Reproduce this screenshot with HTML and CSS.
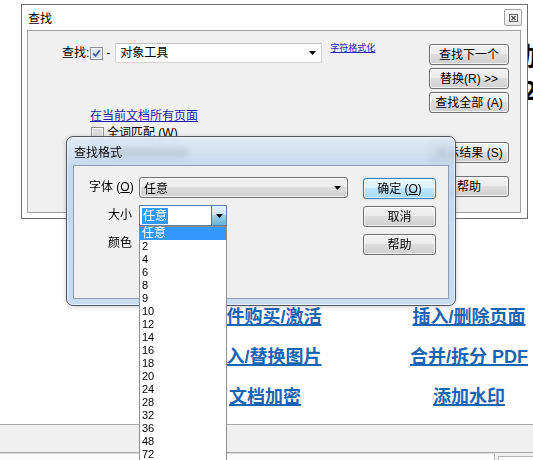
FILE: index.html
```html
<!DOCTYPE html>
<html>
<head>
<meta charset="utf-8">
<link rel="stylesheet" href="styles.css">
</head>
<body>
<div class="page">
  <div class="bg-title"><div>加入</div><div>2012</div></div>
  <div class="links">
    <a>软件购买/激活</a><a>插入/删除页面</a>
    <a>插入/替换图片</a><a>合并/拆分 PDF</a>
    <a>文档加密</a><a>添加水印</a>
  </div>
  <div class="statusbar"></div>
  <div class="fields"><div class="field wide"></div><div class="field"></div></div>
</div>

<div class="find">
  <div class="find-title">
    <span>查找</span>
    <div class="close"><svg width="9" height="8" viewBox="0 0 9 8"><rect x="0.5" y="0.5" width="8" height="7" fill="none" stroke="#666"/><path d="M2.5 2 L6.5 6 M6.5 2 L2.5 6" stroke="#444" stroke-width="1.2"/></svg></div>
  </div>
  <div class="find-panel">
    <div class="find-left">
      <div class="find-row">
        <span class="lbl">查找:</span>
        <svg class="check" width="13" height="13" viewBox="0 0 13 13"><rect x="0.5" y="0.5" width="12" height="12" fill="#f4f4f4" stroke="#8e8f9a"/><rect x="2" y="2" width="9" height="9" fill="#dde4ee"/><path d="M3.2 6.4 L5.4 9 L9.8 3.4" stroke="#3b5998" stroke-width="1.7" fill="none"/></svg>
        <span class="dash">-</span>
        <div class="combo-find"><span>对象工具</span><svg width="7" height="4" viewBox="0 0 7 4"><path d="M0 0h7L3.5 4z" fill="#000"/></svg></div>
        <a class="fmt-link">字符格式化</a>
      </div>
      <a class="scope-link">在当前文档所有页面</a>
      <div class="opt-row">
        <svg class="check2" width="13" height="13" viewBox="0 0 13 13"><rect x="0.5" y="0.5" width="12" height="12" fill="#f4f4f4" stroke="#8e8f8f"/><rect x="2" y="2" width="9" height="9" fill="#dcdcdc"/></svg>
        <span>全词匹配 (W)</span>
      </div>
      <div class="ghost-row"><span class="ghost-box"></span><span class="ghost-bar"></span></div>
    </div>
    <div class="find-buttons">
      <div class="btn">查找下一个</div>
      <div class="btn">替换(R) &gt;&gt;</div>
      <div class="btn">查找全部 (A)</div>
      <div class="btn gap-lg">显示结果 (S)</div>
      <div class="btn gap-md">帮助</div>
    </div>
  </div>
</div>

<div class="format">
  <div class="format-title">查找格式</div>
  <div class="format-panel">
    <div class="form">
      <span class="flbl">字体 (<u>O</u>)</span>
      <div class="combo-btn"><span>任意</span><svg width="7" height="4" viewBox="0 0 7 4"><path d="M0 0h7L3.5 4z" fill="#000"/></svg></div>
      <span class="flbl">大小</span>
      <div class="combo-edit"><span class="sel">任意</span><div class="arrow-btn"><svg width="7" height="4" viewBox="0 0 7 4"><path d="M0 0h7L3.5 4z" fill="#000"/></svg></div></div>
      <span class="flbl">颜色</span>
      <span></span>
    </div>
    <div class="format-buttons">
      <div class="btn default">确定 (<u>O</u>)</div>
      <div class="btn">取消</div>
      <div class="btn">帮助</div>
    </div>
  </div>
</div>

<ul class="dropdown">
  <li class="hl">任意</li>
  <li>2</li><li>4</li><li>6</li><li>8</li><li>9</li><li>10</li><li>12</li><li>14</li>
  <li>16</li><li>18</li><li>20</li><li>24</li><li>28</li><li>32</li><li>36</li><li>48</li><li>72</li>
</ul>
</body>
</html>
```

FILE: styles.css
```css
* { box-sizing: border-box; }
body {
  margin: 0;
  width: 533px;
  height: 460px;
  overflow: hidden;
  background: #fff;
  position: relative;
  font-family: "Liberation Sans", "Noto Sans CJK SC", sans-serif;
  font-size: 12px;
  color: #000;
}
.page { display: flex; flex-direction: column; height: 460px; }
.bg-title {
  height: 300px;
  padding: 38px 0 0 522px;
  font: bold 26px/34px "Noto Sans CJK SC", sans-serif;
  white-space: nowrap;
}
.links {
  height: 124px;
  margin-left: 163px;
  padding-top: 5px;
  display: grid;
  grid-template-columns: 204px 204px;
  grid-auto-rows: 24px;
  row-gap: 16px;
  justify-items: center;
}
.links a {
  font: bold 18px/24px "Liberation Sans", "Noto Sans CJK SC", sans-serif;
  color: #1b63b3;
  text-decoration: underline;
  text-decoration-thickness: 1.5px;
  white-space: nowrap;
}
.statusbar {
  height: 29px;
  border-top: 1px solid #a8a8a8;
  border-bottom: 1px solid #a8a8a8;
  background: #f0f0f0;
}
.fields { flex: 1; display: flex; gap: 3px; background: #f0f0f0; }
.field { border-left: 1px solid #b5b5b5; border-top: 1px solid #e0e0e0; background: #fbfbfb; }
.field.wide { width: 495px; border-left: none; border-right: 1px solid #b5b5b5; }
.field:last-child { flex: 1; margin-top: 3px; border-top: 1px solid #b5b5b5; }

/* find dialog */
.find {
  position: absolute;
  left: 21px; top: 4px;
  width: 507px; height: 215px;
  border: 1px solid #6e6e6e;
  background: #fff;
  display: flex; flex-direction: column;
}
.find-title {
  height: 25px;
  display: flex; align-items: center; justify-content: space-between;
  padding: 0 5px 0 6px;
}
.close {
  width: 18px; height: 17px;
  border: 1px solid #a4a4a4; border-radius: 2px;
  background: linear-gradient(#fdfdfd, #e9e9e9);
  display: flex; align-items: center; justify-content: center;
}
.find-panel {
  flex: 1;
  margin: 0 6px 5px 5px;
  border: 1px solid #a0a0a0;
  background: #f0f0f0;
  display: flex;
  padding: 12px 11px 0 34px;
}
.find-left { flex: 1; display: flex; flex-direction: column; align-items: flex-start; }
.find-row { display: flex; align-items: center; height: 20px; }
.lbl { line-height: 20px; }
.check { margin-left: 1px; }
.dash { margin: 0 5px 0 3px; }
.combo-find {
  width: 207px; height: 20px;
  background: #fff;
  border: 1px solid #d4d4d4;
  border-top-color: #c2c2c2;
  display: flex; align-items: center; justify-content: space-between;
  padding: 0 5px 0 4px;
  line-height: 18px;
}
.fmt-link {
  align-self: flex-start;
  margin-left: 8px;
  font-size: 9px; line-height: 11px;
  color: #2424b0;
  text-decoration: underline;
}
.scope-link {
  margin: 46px 0 0 28px;
  line-height: 14px;
  color: #1e1ea8;
  text-decoration: underline;
}
.opt-row { display: flex; align-items: center; height: 13px; margin: 4px 0 0 29px; gap: 3px; line-height: 13px; }
.ghost-row { display: flex; align-items: center; gap: 4px; height: 13px; margin: 6px 0 0 29px; }
.ghost-box { width: 13px; height: 13px; border: 1px solid #8e8f8f; background: #e4e4e4; }
.ghost-bar { width: 80px; height: 9px; background: #8a8a8a; }
.find-buttons { width: 80px; display: flex; flex-direction: column; gap: 3px; margin-top: 1px; }
.btn {
  height: 21px;
  border: 1px solid #707070;
  border-radius: 3px;
  background: linear-gradient(#f2f2f2 0%, #ebebeb 49%, #dddddd 50%, #cfcfcf 100%);
  box-shadow: inset 0 0 0 1px rgba(255,255,255,0.75);
  display: flex; align-items: center; justify-content: center;
  white-space: nowrap;
  line-height: 18px;
}
.btn u, .flbl u { text-decoration: underline; }
.find-buttons .gap-lg { margin-top: 26px; }
.find-buttons .gap-md { margin-top: 10px; }

/* format dialog */
.format {
  position: absolute;
  left: 66px; top: 136px;
  width: 390px; height: 170px;
  border: 1px solid #4f5762;
  border-radius: 7px;
  background: linear-gradient(180deg, rgba(220,233,247,0.78) 0%, rgba(188,211,237,0.8) 30px, rgba(192,214,239,0.88) 100%);
  backdrop-filter: blur(3px);
  box-shadow: inset 0 0 0 1px rgba(255,255,255,0.6), 0 1px 5px rgba(0,0,0,0.2);
  display: flex; flex-direction: column;
}
.format-title { height: 28px; padding-left: 7px; display: flex; align-items: center; }
.format-panel {
  flex: 1;
  margin: 0 6px 6px 6px;
  border: 1px solid #8c9db3;
  background: #f0f0f0;
  display: flex; align-items: flex-start;
  padding: 11px 12px 0 15px;
}
.form {
  display: grid;
  grid-template-columns: 43px auto;
  column-gap: 7px;
  row-gap: 7px;
  grid-auto-rows: 21px;
  align-items: center;
}
.flbl { text-align: right; white-space: nowrap; line-height: 21px; }
.combo-btn {
  width: 209px; height: 21px;
  border: 1px solid #707070; border-radius: 3px;
  background: linear-gradient(#f2f2f2 0%, #ebebeb 49%, #dddddd 50%, #cfcfcf 100%);
  box-shadow: inset 0 0 0 1px rgba(255,255,255,0.75);
  display: flex; align-items: center; justify-content: space-between;
  padding: 0 6px 0 4px;
}
.combo-edit {
  width: 88px; height: 21px;
  border: 1px solid #5c7fa8;
  background: #fff;
  display: flex; align-items: center;
}
.sel { margin-left: 2px; background: #3399ff; color: #fff; line-height: 16px; padding: 0 1px; }
.arrow-btn {
  margin-left: auto;
  width: 15px; height: 19px;
  border-left: 1px solid #3c7fb1;
  background: linear-gradient(#e5f4fc 0%, #c4e5f6 49%, #98d1ef 50%, #68b3db 100%);
  display: flex; align-items: center; justify-content: center;
}
.format-buttons { margin-left: auto; width: 73px; display: flex; flex-direction: column; gap: 7px; margin-top: 1px; }
.btn.default {
  border-color: #3c7fb1;
  background: linear-gradient(#eaf6fd 0%, #d9f0fc 49%, #bee6fd 50%, #a7d9f5 100%);
  box-shadow: inset 0 0 0 1px rgba(255,255,255,0.6), 0 0 2px #7fc6f0;
}

/* dropdown list */
.dropdown {
  position: absolute;
  left: 139px; top: 226px;
  width: 88px; height: 240px;
  margin: 0; padding: 0;
  list-style: none;
  border: 1px solid #8e8e8e;
  background: #fff;
  font: 11px/13px "Liberation Sans", "Noto Sans CJK SC", sans-serif;
}
.dropdown li { height: 13px; padding-left: 2px; }
.dropdown li.hl { background: #3399ff; color: #fff; font-size: 12px; }
```
